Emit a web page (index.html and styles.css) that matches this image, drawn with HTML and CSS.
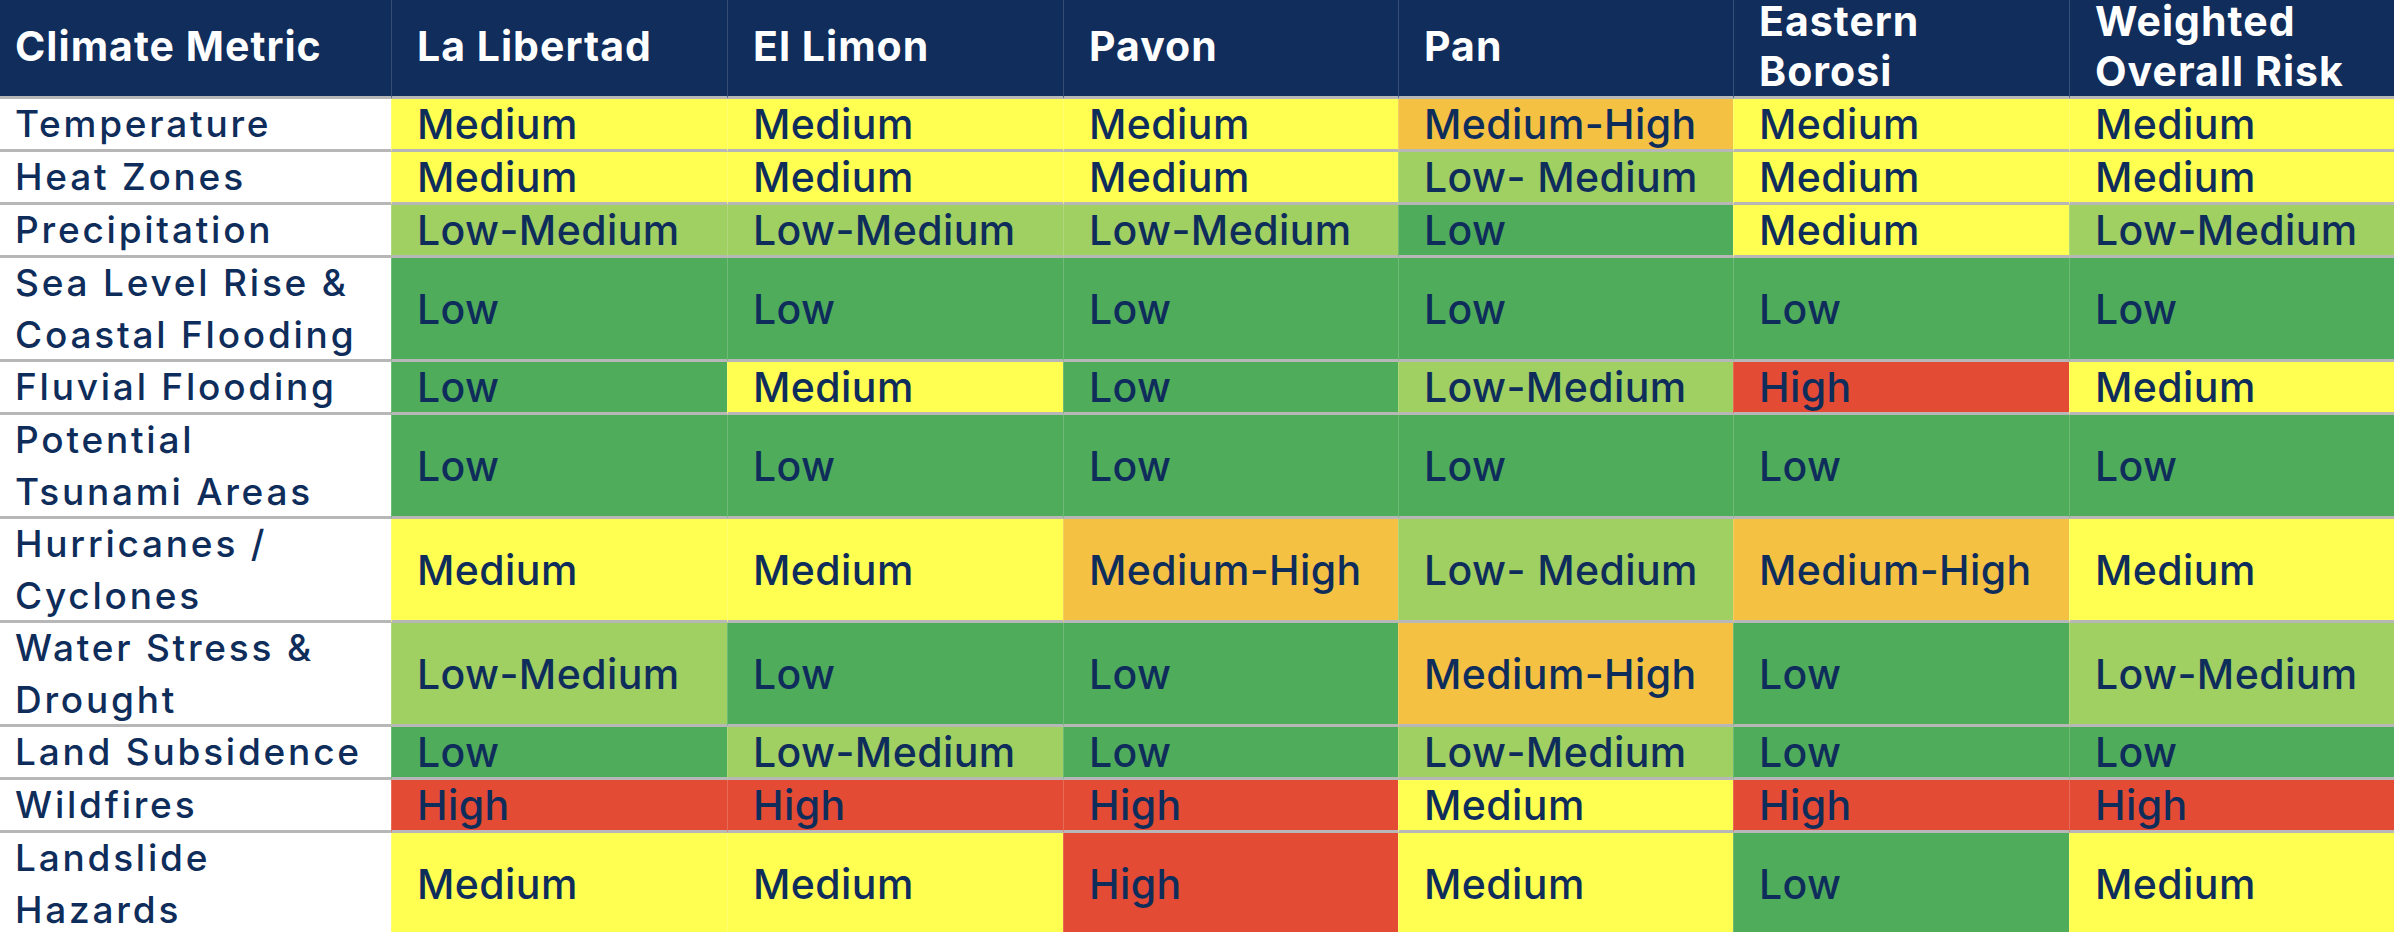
FILE: index.html
```html
<!DOCTYPE html>
<html lang="en">
<head>
<meta charset="utf-8">
<title>Climate Risk Matrix</title>
<link rel="stylesheet" href="styles.css">
</head>
<body>
<div class="matrix" role="table">
  <div class="row head" role="row">
    <div class="cell metric" role="columnheader">Climate Metric</div>
    <div class="cell" role="columnheader">La Libertad</div>
    <div class="cell" role="columnheader">El Limon</div>
    <div class="cell" role="columnheader">Pavon</div>
    <div class="cell" role="columnheader">Pan</div>
    <div class="cell two" role="columnheader">Eastern<br>Borosi</div>
    <div class="cell two" role="columnheader">Weighted<br>Overall Risk</div>
  </div>

  <div class="row" role="row">
    <div class="cell metric" role="rowheader">Temperature</div>
    <div class="cell med" role="cell">Medium</div>
    <div class="cell med" role="cell">Medium</div>
    <div class="cell med" role="cell">Medium</div>
    <div class="cell medhigh" role="cell">Medium-High</div>
    <div class="cell med" role="cell">Medium</div>
    <div class="cell med" role="cell">Medium</div>
  </div>

  <div class="row" role="row">
    <div class="cell metric" role="rowheader">Heat Zones</div>
    <div class="cell med" role="cell">Medium</div>
    <div class="cell med" role="cell">Medium</div>
    <div class="cell med" role="cell">Medium</div>
    <div class="cell lowmed" role="cell">Low- Medium</div>
    <div class="cell med" role="cell">Medium</div>
    <div class="cell med" role="cell">Medium</div>
  </div>

  <div class="row" role="row">
    <div class="cell metric" role="rowheader">Precipitation</div>
    <div class="cell lowmed" role="cell">Low-Medium</div>
    <div class="cell lowmed" role="cell">Low-Medium</div>
    <div class="cell lowmed" role="cell">Low-Medium</div>
    <div class="cell low" role="cell">Low</div>
    <div class="cell med" role="cell">Medium</div>
    <div class="cell lowmed" role="cell">Low-Medium</div>
  </div>

  <div class="row tall" role="row">
    <div class="cell metric" role="rowheader">Sea Level Rise &amp;<br>Coastal Flooding</div>
    <div class="cell low" role="cell">Low</div>
    <div class="cell low" role="cell">Low</div>
    <div class="cell low" role="cell">Low</div>
    <div class="cell low" role="cell">Low</div>
    <div class="cell low" role="cell">Low</div>
    <div class="cell low" role="cell">Low</div>
  </div>

  <div class="row" role="row">
    <div class="cell metric" role="rowheader">Fluvial Flooding</div>
    <div class="cell low" role="cell">Low</div>
    <div class="cell med" role="cell">Medium</div>
    <div class="cell low" role="cell">Low</div>
    <div class="cell lowmed" role="cell">Low-Medium</div>
    <div class="cell high" role="cell">High</div>
    <div class="cell med" role="cell">Medium</div>
  </div>

  <div class="row tall" role="row">
    <div class="cell metric" role="rowheader">Potential<br>Tsunami Areas</div>
    <div class="cell low" role="cell">Low</div>
    <div class="cell low" role="cell">Low</div>
    <div class="cell low" role="cell">Low</div>
    <div class="cell low" role="cell">Low</div>
    <div class="cell low" role="cell">Low</div>
    <div class="cell low" role="cell">Low</div>
  </div>

  <div class="row tall" role="row">
    <div class="cell metric" role="rowheader">Hurricanes /<br>Cyclones</div>
    <div class="cell med" role="cell">Medium</div>
    <div class="cell med" role="cell">Medium</div>
    <div class="cell medhigh" role="cell">Medium-High</div>
    <div class="cell lowmed" role="cell">Low- Medium</div>
    <div class="cell medhigh" role="cell">Medium-High</div>
    <div class="cell med" role="cell">Medium</div>
  </div>

  <div class="row tall" role="row">
    <div class="cell metric" role="rowheader">Water Stress &amp;<br>Drought</div>
    <div class="cell lowmed" role="cell">Low-Medium</div>
    <div class="cell low" role="cell">Low</div>
    <div class="cell low" role="cell">Low</div>
    <div class="cell medhigh" role="cell">Medium-High</div>
    <div class="cell low" role="cell">Low</div>
    <div class="cell lowmed" role="cell">Low-Medium</div>
  </div>

  <div class="row" role="row">
    <div class="cell metric" role="rowheader">Land Subsidence</div>
    <div class="cell low" role="cell">Low</div>
    <div class="cell lowmed" role="cell">Low-Medium</div>
    <div class="cell low" role="cell">Low</div>
    <div class="cell lowmed" role="cell">Low-Medium</div>
    <div class="cell low" role="cell">Low</div>
    <div class="cell low" role="cell">Low</div>
  </div>

  <div class="row" role="row">
    <div class="cell metric" role="rowheader">Wildfires</div>
    <div class="cell high" role="cell">High</div>
    <div class="cell high" role="cell">High</div>
    <div class="cell high" role="cell">High</div>
    <div class="cell med" role="cell">Medium</div>
    <div class="cell high" role="cell">High</div>
    <div class="cell high" role="cell">High</div>
  </div>

  <div class="row tall" role="row">
    <div class="cell metric" role="rowheader">Landslide<br>Hazards</div>
    <div class="cell med" role="cell">Medium</div>
    <div class="cell med" role="cell">Medium</div>
    <div class="cell high" role="cell">High</div>
    <div class="cell med" role="cell">Medium</div>
    <div class="cell low" role="cell">Low</div>
    <div class="cell med" role="cell">Medium</div>
  </div>
</div>
</body>
</html>
```

FILE: styles.css
```css
html, body {
  margin: 0;
  padding: 0;
  background: #ffffff;
  overflow: hidden;
}

.matrix {
  display: grid;
  grid-template-columns: 391px 336px 336px 335px 335px 336px 325px;
  width: 2394px;
  font-family: Inter, "Noto Sans", sans-serif;
  color: #0f2d5b;
}

.row {
  display: contents;
}

.cell {
  box-sizing: border-box;
  height: 53px;
  display: flex;
  align-items: center;
  padding-left: 25px;
  border-bottom: 3px solid #b7b7b7;
  border-left: 1px solid rgba(255, 255, 255, 0.18);
  font-size: 41px;
  font-weight: 500;
  letter-spacing: 0.01em;
  line-height: 50px;
  white-space: nowrap;
}

.row.tall .cell {
  height: 104px;
}

.cell.metric {
  padding-left: 15px;
  border-left: none;
  background: #ffffff;
  font-size: 37px;
  font-weight: 500;
  letter-spacing: 0.075em;
  line-height: 52px;
}

.row.head .cell {
  height: 99px;
  background: #102d5b;
  color: #ffffff;
  font-weight: 700;
  font-size: 41px;
  letter-spacing: 0.025em;
  line-height: 50px;
  padding-bottom: 4px;
  border-left: 1px solid rgba(255, 255, 255, 0.16);
}

.row.head .cell.metric {
  border-left: none;
}

.med { background: #ffff52; }
.lowmed { background: #a0cf62; }
.low { background: #4fac5b; }
.medhigh { background: #f5c143; }
.high { background: #e34b34; }
```
